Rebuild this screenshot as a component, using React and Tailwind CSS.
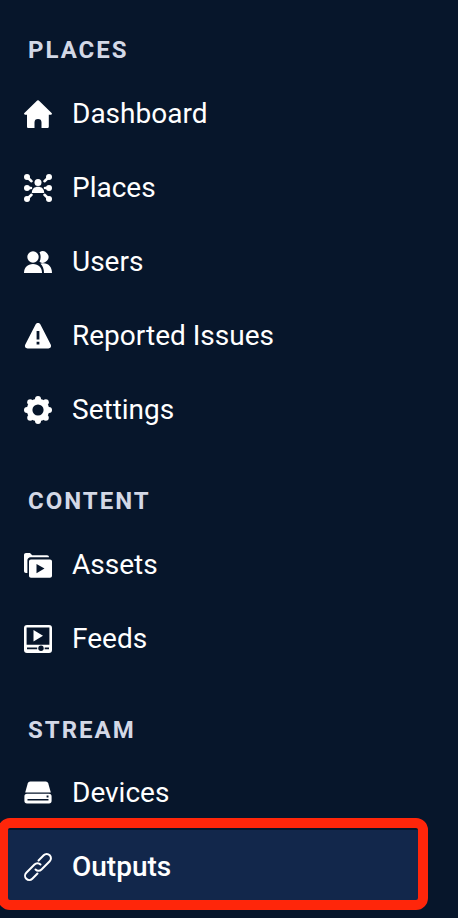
function Icon({ children }) {
  return (
    <svg viewBox="0 0 28 28" className="size-7 shrink-0" fill="currentColor" aria-hidden="true">
      {children}
    </svg>
  );
}

const HomeIcon = () => (
  <Icon>
    <path d="M13.2 .6a1.200 1.200 0 0 1 1.600 0L27.600 13c.8.8.3 1.800-.7 1.800h-2.100v11.600c0 .9-.6 1.600-1.500 1.600H17.500v-5.400a3.500 3.500 0 0 0-7 0V28H4.500c-.9 0-1.500-.7-1.500-1.600V14.800H1.100c-1 0-1.500-1-.7-1.800Z" />
  </Icon>
);

const HubIcon = () => (
  <Icon>
    <circle cx="14" cy="8.500" r="3.500" />
    <path d="M7.800 19c0-4.200 2.600-6.200 6.200-6.200s6.200 2 6.200 6.200Z" />
    <g stroke="currentColor" strokeWidth="2.600" strokeLinecap="round">
      <path d="m3 3 4.500 4.200M25 3l-4.500 4.200M3 14h4M25 14h-4M3 25l4.500-4.200M25 25l-4.500-4.200" />
    </g>
    <circle cx="3" cy="3" r="3" />
    <circle cx="25" cy="3" r="3" />
    <circle cx="3" cy="14" r="3" />
    <circle cx="25" cy="14" r="3" />
    <circle cx="3" cy="25" r="3" />
    <circle cx="25" cy="25" r="3" />
  </Icon>
);

const UsersIcon = () => (
  <Icon>
    <circle cx="9" cy="9" r="5.700" />
    <path d="M0 25c0-5.500 3.500-9 9-9s9 3.500 9 9Z" />
    <path d="M15.500 4.300a5.700 5.700 0 1 1 0 9.400c1.500-2.800 1.500-6.600 0-9.400ZM16.500 15.700c7-1.700 11.500 2.600 11.500 9.300h-8c0-4-1.200-7.200-3.500-9.300Z" />
  </Icon>
);

const WarningIcon = () => (
  <Icon>
    <path
      fillRule="evenodd"
      d="M11.700 2.300c1-1.800 3.600-1.800 4.600 0l10.400 20.200c1 1.900-.2 3.900-2.300 3.900H3.600c-2.100 0-3.300-2-2.300-3.900ZM12.600 9v8.500h2.800V9Zm0 10.800v2.800h2.800v-2.800Z"
    />
  </Icon>
);

const GearIcon = () => (
  <Icon>
    <circle cx="14" cy="14" r="8.400" fill="none" stroke="currentColor" strokeWidth="5.600" />
    <circle cx="14" cy="3" r="3" />
    <circle cx="21.800" cy="6.200" r="3" />
    <circle cx="25" cy="14" r="3" />
    <circle cx="21.800" cy="21.800" r="3" />
    <circle cx="14" cy="25" r="3" />
    <circle cx="6.200" cy="21.800" r="3" />
    <circle cx="3" cy="14" r="3" />
    <circle cx="6.200" cy="6.200" r="3" />
  </Icon>
);

const AssetsIcon = () => (
  <Icon>
    <path d="M0 4c0-1.200.8-2 2-2h4l2.200 2.300H23c1.300 0 2 .8 2 2H6.500C4.700 6.300 3.400 7.600 3.400 9.400V22H2c-1.200 0-2-.8-2-2Z" />
    <path
      fillRule="evenodd"
      d="M7 8.400h19c1.200 0 2 .8 2 2v14.400c0 1.200-.8 2-2 2H7c-1.200 0-2-.8-2-2V10.400c0-1.200.8-2 2-2Zm5.500 4.600v9.200l8-4.600Z"
    />
  </Icon>
);

const FeedsIcon = () => (
  <Icon>
    <path
      fillRule="evenodd"
      d="M3 0h22a3 3 0 0 1 3 3v22a3 3 0 0 1-3 3H3a3 3 0 0 1-3-3V3a3 3 0 0 1 3-3Zm-.4 2.600v17.200h22.800V2.600ZM3 22.400v1.800h10.200v-1.800Zm17.700 0v1.800H25v-1.800Z"
    />
    <path d="M9.500 5v11.500l9.500-5.700Z" />
    <circle cx="17" cy="23.300" r="2.700" className="fill-[#07162b]" />
  </Icon>
);

const DeviceIcon = () => (
  <Icon>
    <path d="M3.700 4.500C4.100 3.200 5 2.500 6.300 2.500h15.400c1.300 0 2.200.7 2.600 2L26.800 13.500H1.200Z" />
    <path
      fillRule="evenodd"
      d="M3 14.800h22c1.700 0 2.600.9 2.600 2.600v4.400c0 1.700-.9 2.600-2.600 2.600H3c-1.700 0-2.600-.9-2.600-2.600v-4.400c0-1.700.9-2.600 2.600-2.600ZM3.500 20v1.600h21V20ZM22.600 16.600v1.800h1.900v-1.800Z"
    />
  </Icon>
);

const LinkIcon = () => (
  <svg
    viewBox="0 0 28 28"
    className="size-7 shrink-0"
    fill="none"
    stroke="currentColor"
    strokeWidth="2"
    strokeLinecap="round"
    strokeLinejoin="round"
    aria-hidden="true"
  >
    <path d="M14.500 7.500 19.700 2.300a4.240 4.240 0 0 1 6 6L17.500 16.500a4.240 4.240 0 0 1-6 0" />
    <path d="M13.500 20.500 8.300 25.700a4.240 4.240 0 0 1-6-6L10.500 11.500a4.240 4.240 0 0 1 6 0" />
  </svg>
);

const sections = [
  {
    title: "PLACES",
    spacing: "pt-[38px] pb-[15px]",
    items: [
      { label: "Dashboard", icon: HomeIcon },
      { label: "Places", icon: HubIcon },
      { label: "Users", icon: UsersIcon },
      { label: "Reported Issues", icon: WarningIcon },
      { label: "Settings", icon: GearIcon },
    ],
  },
  {
    title: "CONTENT",
    spacing: "pt-[42px] pb-[15px]",
    items: [
      { label: "Assets", icon: AssetsIcon },
      { label: "Feeds", icon: FeedsIcon },
    ],
  },
  {
    title: "STREAM",
    spacing: "pt-[42px] pb-[14px]",
    items: [
      { label: "Devices", icon: DeviceIcon },
      { label: "Outputs", icon: LinkIcon, active: true },
    ],
  },
];

function NavItem({ label, icon: Glyph, active }) {
  return (
    <li className={active ? "relative mr-10" : "mr-10"}>
      <a
        href="#"
        aria-current={active ? "page" : undefined}
        className={
          active
            ? "flex h-[74px] items-center gap-5 bg-[#12274b] pl-6 font-medium"
            : "flex h-[74px] items-center gap-5 pl-6"
        }
      >
        <Glyph />
        <span>{label}</span>
      </a>
      {active && (
        <div className="pointer-events-none absolute -top-3 -right-[10px] -bottom-1.5 -left-[2px] rounded-xl border-10 border-[#ff260a]" />
      )}
    </li>
  );
}

export default function App() {
  return (
    <nav className="min-h-screen overflow-hidden bg-[#07162b] pb-3 font-['Roboto',sans-serif] text-[28px] leading-8 text-white">
      {sections.map(({ title, spacing, items }) => (
        <section key={title}>
          <h2 className={`${spacing} pl-7 text-2xl leading-6 font-bold tracking-[2px] text-[#d3d8e6]`}>
            {title}
          </h2>
          <ul>
            {items.map((item) => (
              <NavItem key={item.label} {...item} />
            ))}
          </ul>
        </section>
      ))}
    </nav>
  );
}
